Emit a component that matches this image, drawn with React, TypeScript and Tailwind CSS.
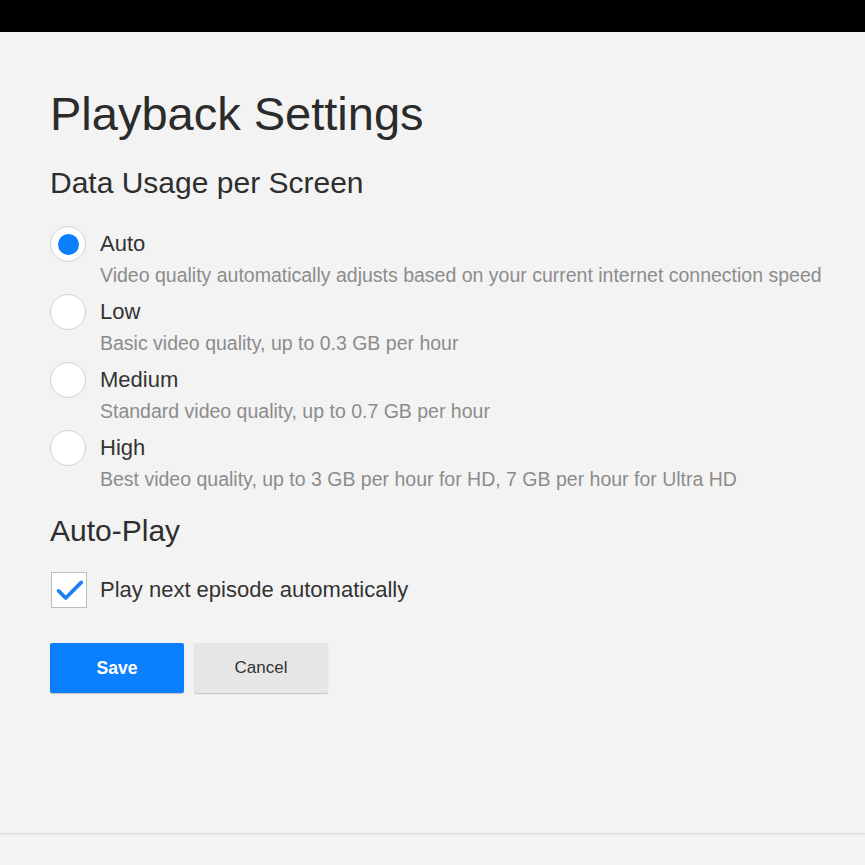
const options = [
  { label: "Auto", desc: "Video quality automatically adjusts based on your current internet connection speed", checked: true },
  { label: "Low", desc: "Basic video quality, up to 0.3 GB per hour", checked: false },
  { label: "Medium", desc: "Standard video quality, up to 0.7 GB per hour", checked: false },
  { label: "High", desc: "Best video quality, up to 3 GB per hour for HD, 7 GB per hour for Ultra HD", checked: false },
];

function Radio({ checked }: { checked: boolean }) {
  return (
    <span className="flex h-9 w-9 shrink-0 items-center justify-center rounded-full border border-[#cfcfcf] bg-white">
      {checked && <span className="h-[21px] w-[21px] rounded-full bg-[#0a80ff]" />}
    </span>
  );
}

export default function App() {
  return (
    <div className="flex min-h-[865px] flex-col bg-[#f3f3f3] font-['Liberation_Sans',Arial,sans-serif]">
      <div className="h-8 bg-black" />

      <main className="flex flex-col pl-[50px] pt-[58px]">
        <h1 className="text-[47px] leading-none text-[#2b2b2b]">Playback Settings</h1>

        <h2 className="mt-[31px] text-[30px] leading-none text-[#2e2e2e]">Data Usage per Screen</h2>

        <div className="mt-[28px] flex flex-col gap-[9px]">
          {options.map((o) => (
            <div key={o.label} className="flex flex-col">
              <div className="flex items-center gap-[14px]">
                <Radio checked={o.checked} />
                <span className="text-[22px] leading-none text-[#333]">{o.label}</span>
              </div>
              <p className="mt-[3.5px] pl-[50px] text-[19.5px] leading-none text-[#8c8c8c]">{o.desc}</p>
            </div>
          ))}
        </div>

        <h2 className="mt-[27px] text-[30px] leading-none text-[#2e2e2e]">Auto-Play</h2>

        <label className="mt-[26px] flex items-center gap-[13px]">
          <span className="ml-[1px] flex h-9 w-9 shrink-0 items-center justify-center border border-[#bdbdbd] bg-white">
            <svg width="36" height="36" viewBox="0 0 36 36" fill="none">
              <path d="M7 19l7.5 7.5L31 10" stroke="#1f7ff0" strokeWidth="4" strokeLinecap="round" strokeLinejoin="round" />
            </svg>
          </span>
          <span className="text-[22px] leading-none text-[#333]">Play next episode automatically</span>
        </label>

        <div className="mt-[35px] flex gap-[10px]">
          <button className="h-[50px] w-[134px] rounded-[2px] bg-[#0a80ff] text-[17.5px] font-bold text-white shadow-[0_1px_1px_rgba(0,0,0,0.2)]">
            Save
          </button>
          <button className="h-[50px] w-[134px] rounded-[2px] bg-[#e6e6e6] text-[17px] text-[#333] shadow-[0_1px_1px_rgba(0,0,0,0.2)]">
            Cancel
          </button>
        </div>
      </main>

      <div className="mt-auto mb-[31px] h-px bg-[#dcdcdc] shadow-[0_1px_2px_rgba(0,0,0,0.08)]" />
    </div>
  );
}
